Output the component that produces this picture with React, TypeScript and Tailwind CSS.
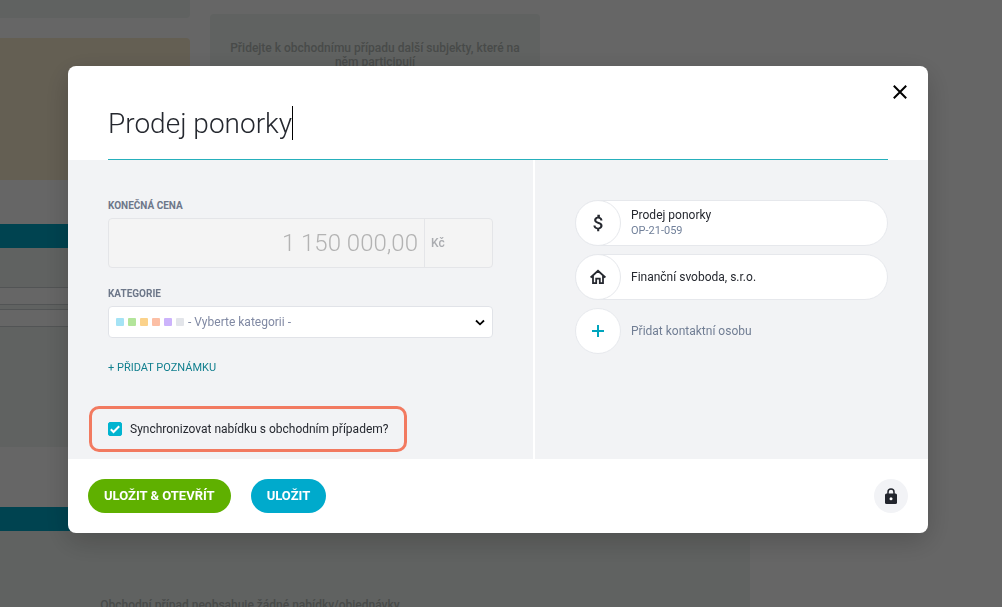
import { useState, type ReactNode } from "react";

const SWATCHES = [
  "bg-[#a5e3f5]",
  "bg-[#b3e59b]",
  "bg-[#fbd28b]",
  "bg-[#fcbfa5]",
  "bg-[#ccb3fb]",
  "bg-[#e3e5ea]",
];

function PageBackdrop() {
  return (
    <div className="h-screen overflow-hidden bg-white text-xs font-medium text-[#b4bab7]" aria-hidden="true">
      <div className="flex h-[224px] gap-5">
        <div className="w-[190px]">
          <div className="h-[18px] rounded-br bg-[#f0f5f2]" />
          <div className="mt-5 h-[142px] rounded-r bg-[#faedd0]" />
        </div>
        <div className="pt-[14px]">
          <div className="h-[120px] w-[330px] rounded bg-[#f0f5f2] px-4 pt-[27px] text-center leading-[14px]">
            Přidejte k obchodnímu případu další subjekty, které na něm participují
          </div>
        </div>
      </div>
      <div className="max-w-[750px]">
        <div className="h-6 bg-[#00a8c8]" />
        <div className="h-[199px] bg-[#f0f5f2] pt-[39px]">
          <div className="h-[18px] border-y border-[#cdd2d4] bg-white" />
          <div className="mt-1 h-[18px] border-y border-[#cdd2d4] bg-white" />
        </div>
        <div className="mt-[60px] h-6 bg-[#00a8c8]" />
        <div className="h-[120px] bg-[#f0f5f2] pt-[66px]">
          <p className="w-[500px] text-center leading-4">
            Obchodní případ neobsahuje žádné nabídky/objednávky
          </p>
        </div>
      </div>
    </div>
  );
}

function Circle({ children }: { children: ReactNode }) {
  return (
    <span className="-my-px -ml-px flex size-[46px] shrink-0 items-center justify-center rounded-full border border-[#e6e8ec] bg-white">
      {children}
    </span>
  );
}

function EntityCard({ icon, title, subtitle }: { icon: ReactNode; title: string; subtitle?: string }) {
  return (
    <div className="flex h-[46px] items-center gap-[10px] rounded-full border border-[#e6e8ec] bg-white">
      <Circle>{icon}</Circle>
      <div className="leading-4">
        <p>{title}</p>
        {subtitle && <p className="text-[11px] text-[#71809a]">{subtitle}</p>}
      </div>
    </div>
  );
}

export default function App() {
  const [name, setName] = useState("Prodej ponorky");
  const [sync, setSync] = useState(true);

  return (
    <div className="font-[Roboto,sans-serif]">
      <PageBackdrop />
      <div className="fixed inset-0 flex items-start justify-center bg-black/60 pt-[66px] pr-[6px]">
        <div
          role="dialog"
          aria-modal="true"
          aria-label="Prodej ponorky"
          className="w-full max-w-[860px] overflow-hidden rounded-lg bg-white text-xs text-[#25282f] shadow-[0_8px_28px_rgba(0,0,0,0.2)]"
        >
          <div className="relative px-10 pt-[34px]">
            <div className="flex h-[60px] items-start border-b border-[#26b0bc] pt-[6px]">
              <input
                aria-label="Název"
                value={name}
                onChange={(e) => setName(e.target.value)}
                className="field-sizing-content h-9 text-[28px] font-light caret-transparent outline-none"
              />
              <span className="h-[34px] w-px bg-black" />
            </div>
            <button type="button" aria-label="Zavřít" className="absolute top-[14px] right-4 p-1 text-black">
              <svg viewBox="0 0 16 16" className="size-4" fill="none" stroke="currentColor" strokeWidth={2}>
                <path d="M1.8 1.8 14.2 14.2M14.2 1.8 1.8 14.2" />
              </svg>
            </button>
          </div>

          <div className="flex bg-[#f2f3f5]">
            <div className="min-w-0 flex-1 border-r-2 border-white pt-[38px] pr-10 pb-[7px] pl-10">
              <label htmlFor="price" className="mb-1 block text-[10px] leading-4 font-bold text-[#6d7789]">
                KONEČNÁ CENA
              </label>
              <div className="flex h-[50px] rounded-sm border border-[#e4e5e8] bg-[#f4f4f4]">
                <input
                  id="price"
                  disabled
                  value="1 150 000,00"
                  className="min-w-0 flex-1 pr-[6px] text-right text-2xl font-light text-[#b3b3b3]"
                />
                <span className="flex w-[68px] items-center border-l border-[#e4e5e8] pl-[6px] font-medium text-[#aaacb0]">
                  Kč
                </span>
              </div>

              <label htmlFor="category" className="mt-[18px] mb-1 block text-[10px] leading-4 font-bold text-[#6d7789]">
                KATEGORIE
              </label>
              <div className="relative flex h-8 items-center rounded-sm border border-[#e1e3e8] bg-white pl-[7px]">
                <div className="flex gap-1">
                  {SWATCHES.map((c) => (
                    <span key={c} className={`size-2 rounded-[1px] ${c}`} />
                  ))}
                </div>
                <select id="category" className="h-full flex-1 appearance-none pl-1 text-[#8089a3] outline-none">
                  <option>- Vyberte kategorii -</option>
                </select>
                <svg
                  viewBox="0 0 10 8"
                  className="pointer-events-none absolute right-[7px] h-2 w-[10px]"
                  fill="none"
                  stroke="#000"
                  strokeWidth={1.8}
                >
                  <path d="M1 2.5 5 6.3 9 2.5" />
                </svg>
              </div>

              <button type="button" className="mt-5 block text-[11px] leading-5 text-[#117f8e]">
                + PŘIDAT POZNÁMKU
              </button>

              <label className="mt-7 -ml-[19px] flex h-[46px] w-fit items-center gap-2 rounded-[10px] border-3 border-[#f27a60] px-4">
                <span className="relative flex size-[14px]">
                  <input
                    type="checkbox"
                    checked={sync}
                    onChange={(e) => setSync(e.target.checked)}
                    className="size-[14px] appearance-none rounded-[2px] border border-[#00b4d0] bg-white checked:bg-[#00b4d0]"
                  />
                  <svg
                    viewBox="0 0 14 14"
                    className="pointer-events-none absolute inset-0 size-[14px]"
                    fill="none"
                    stroke="#fff"
                    strokeWidth={2}
                  >
                    <path d="M2.8 7.3 5.5 10 11.2 4.2" />
                  </svg>
                </span>
                Synchronizovat nabídku s obchodním případem?
              </label>
            </div>

            <div className="flex w-[393px] shrink-0 flex-col gap-2 px-10 pt-10">
              <EntityCard
                title="Prodej ponorky"
                subtitle="OP-21-059"
                icon={
                  <svg viewBox="0 0 24 24" className="size-5" fill="currentColor">
                    <path d="M14.25 4.67V2h-3v2.62C9.4 4.95 7.35 6.3 7.35 8.5c0 2.5 1.7 3.5 4.45 4.3 2.1.6 3 1.2 3 2.55 0 1.3-1.1 2.2-2.75 2.2-1.9 0-2.9-1-3.05-2.6H6.5c.15 2.5 1.8 4 4.5 4.4V22h2.5v-2.6c2.25-.35 3.95-1.7 3.95-4.05 0-2.8-2.1-3.8-4.6-4.55-2-.6-2.85-1.05-2.85-2.3 0-1.1.9-1.85 2.35-1.85 1.6 0 2.4.85 2.5 2.35h2.5c-.1-2.25-1.25-3.9-3.3-4.33Z" />
                  </svg>
                }
              />
              <EntityCard
                title="Finanční svoboda, s.r.o."
                icon={
                  <svg viewBox="0 0 16 16" className="size-4" fill="none" stroke="currentColor" strokeWidth={1.8}>
                    <path d="M.6 8.5 8 1.8 15.4 8.5M3 6.8V14.2H6.2V9.6H9.8V14.2H13V6.8" />
                  </svg>
                }
              />
              <button type="button" className="flex h-[46px] items-center gap-[10px] pl-px text-[#717e94]">
                <Circle>
                  <svg viewBox="0 0 12 12" className="size-3" fill="none" stroke="#00a5bd" strokeWidth={2}>
                    <path d="M6 0V12M0 6H12" />
                  </svg>
                </Circle>
                Přidat kontaktní osobu
              </button>
            </div>
          </div>

          <div className="flex items-center gap-5 p-5 text-[13px] font-bold text-white">
            <button type="button" className="h-[34px] rounded-full bg-[#5fb000] px-4">
              ULOŽIT & OTEVŘÍT
            </button>
            <button type="button" className="h-[34px] rounded-full bg-[#00aacc] px-4">
              ULOŽIT
            </button>
            <button
              type="button"
              aria-label="Zamknout"
              className="ml-auto flex size-[34px] items-center justify-center rounded-full bg-[#f2f3f6] text-[#22252d]"
            >
              <svg viewBox="0 0 12 16" className="h-4 w-3" fill="none">
                <path d="M3 6V4a3 3 0 0 1 6 0v2" stroke="currentColor" strokeWidth={1.5} />
                <rect y="5.5" width="12" height="10.5" rx="1.5" fill="currentColor" />
                <circle cx="6" cy="10.8" r="1.5" fill="#fff" />
              </svg>
            </button>
          </div>
        </div>
      </div>
    </div>
  );
}
